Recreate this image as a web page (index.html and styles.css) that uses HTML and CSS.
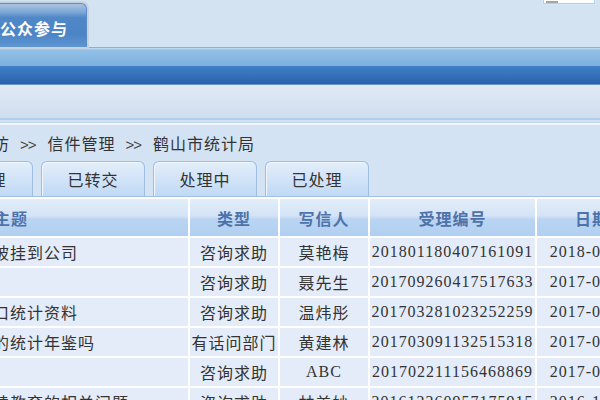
FILE: index.html
```html
<!DOCTYPE html>
<html lang="zh-CN">
<head>
    <meta charset="UTF-8">
    <meta name="viewport" content="width=device-width, initial-scale=1.0">
    <title>信件管理</title>
    <link rel="stylesheet" href="styles.css">
</head>
<body>
    <div class="top">
        <div class="nav-tab">公众参与</div>
        <div class="search"><span></span></div>
    </div>
    <div class="bar"></div>
    <div class="subbar"></div>
    <div class="stripe"></div>
    <div class="crumb">在线信访<span class="sep">&gt;&gt;</span>信件管理<span class="sep">&gt;&gt;</span>鹤山市统计局</div>
    <div class="tabs">
        <div class="tab">未处理</div>
        <div class="tab">已转交</div>
        <div class="tab">处理中</div>
        <div class="tab">已处理</div>
    </div>
    <div class="rule"></div>
    <table class="list">
        <colgroup>
            <col class="c-title">
            <col class="c-type">
            <col class="c-name">
            <col class="c-no">
            <col class="c-date">
        </colgroup>
        <thead>
            <tr>
                <th class="title">主题</th>
                <th>类型</th>
                <th>写信人</th>
                <th>受理编号</th>
                <th>日期</th>
            </tr>
        </thead>
        <tbody>
            <tr>
                <td class="title">我的养老保险怎么被挂到公司</td>
                <td>咨询求助</td>
                <td>莫艳梅</td>
                <td>201801180407161091</td>
                <td>2018-01-18</td>
            </tr>
            <tr>
                <td class="title">统计师报名咨询</td>
                <td>咨询求助</td>
                <td>聂先生</td>
                <td>201709260417517633</td>
                <td>2017-09-26</td>
            </tr>
            <tr>
                <td class="title">如何查询鹤山市人口统计资料</td>
                <td>咨询求助</td>
                <td>温炜彤</td>
                <td>201703281023252259</td>
                <td>2017-03-28</td>
            </tr>
            <tr>
                <td class="title">请问有鹤山市近年的统计年鉴吗</td>
                <td>有话问部门</td>
                <td>黄建林</td>
                <td>201703091132515318</td>
                <td>2017-03-09</td>
            </tr>
            <tr>
                <td class="title">关于统计数据</td>
                <td>咨询求助</td>
                <td>ABC</td>
                <td>201702211156468869</td>
                <td>2017-02-21</td>
            </tr>
            <tr>
                <td class="title">关于统计师参加继续教育的相关问题</td>
                <td>咨询求助</td>
                <td>林美妙</td>
                <td>201612260957175915</td>
                <td>2016-12-26</td>
            </tr>
        </tbody>
    </table>
</body>
</html>
```

FILE: styles.css
```css
body{
     margin:0;
     padding:0;
     width:600px;
     height:400px;
     overflow:hidden;
     background-color:#d4e3f3;
     font-family:"Noto Sans CJK SC", sans-serif;
     color:#333;
}
.top{
     height:47px;
     display:flex;
     justify-content:space-between;
     align-items:flex-start;
     background-color:#d4e3f2;
}
.nav-tab{
     margin-top:3px;
     margin-left:-18px;
     height:40px;
     padding:4px 18px 0 17px;
     line-height:40px;
     box-sizing:border-box;
     height:44px;
     font-size:16px;
     font-weight:bold;
     letter-spacing:1px;
     color:#fff;
     border:1px solid #5a8ccc;
     border-bottom:none;
     border-radius:6px 6px 0 0;
     box-shadow:0 0 0 2px #c6d2e0;
     background:linear-gradient(#abc3e2 0, #7fa8d8 18%, #4f87c7 32%, #4c85c6 70%, #5e95d1 100%);
}
.search{
     width:50px;
     height:18px;
     margin-top:-16px;
     margin-right:5px;
     background-color:#fff;
     border:1px solid #a9d0f7;
     box-shadow:0 0 0 1px #d6e9fb;
     display:flex;
     align-items:flex-end;
}
.search span{
     width:12px;
     height:2px;
     margin-left:2px;
     background-color:#a4a4a4;
}
.bar{
     height:36px;
     border-top:1px solid #86afd9;
     border-bottom:1px solid #6b93c4;
     background:linear-gradient(#c4def4 0, #92c0e7 2px, #7db0de 50%, #3f80c7 51%, #2a62ac 100%);
}
.subbar{
     height:33px;
     background:linear-gradient(#e0e9f5, #d1def0);
}
.stripe{
     height:8px;
     background:linear-gradient(#b2cceb 0, #b2cceb 2px, #d0e1f5 2px, #d0e1f5 4px, #bed4ef 4px, #bed4ef 5px, #f4f8fd 5px, #f4f8fd 7px, #d3e2f3 7px);
}
.crumb{
     height:35px;
     line-height:34px;
     margin-left:-58px;
     font-size:16px;
     letter-spacing:1px;
     white-space:nowrap;
}
.sep{
     font-family:"Liberation Sans", sans-serif;
     font-size:15px;
     letter-spacing:-1px;
     margin:0 12px 0 10px;
     color:#444;
}
.tabs{
     display:flex;
     gap:8px;
     height:35px;
     margin-left:-71px;
}
.tab{
     width:104px;
     box-sizing:border-box;
     border:1px solid #9dbde3;
     border-bottom:none;
     border-radius:6px 6px 0 0;
     box-shadow:inset 1px 1px 0 #f2f7fd;
     background:linear-gradient(#e3eefa, #c0d9f5);
     text-align:center;
     line-height:35px;
     font-size:16px;
     letter-spacing:1px;
}
.rule{
     height:3px;
     background:linear-gradient(#a3c1e5 0, #a3c1e5 1px, #fff 1px);
}
.list{
     margin-left:-150px;
     table-layout:fixed;
     border-collapse:separate;
     border-spacing:0;
     width:797px;
     font-family:"Liberation Serif", "Noto Sans CJK SC", serif;
     font-size:16px;
     letter-spacing:1px;
}
.c-title{ width:338px; }
.c-type{ width:90px; }
.c-name{ width:90px; }
.c-no{ width:167px; }
.c-date{ width:112px; }
.list th, .list td{
     padding:0;
     text-align:center;
     white-space:nowrap;
     overflow:hidden;
     border-left:2px solid #fff;
     border-bottom:2px solid #fff;
}
.list th:first-child, .list td:first-child{
     border-left:none;
}
.list th{
     height:37px;
     color:#4e72aa;
     font-weight:bold;
     background:linear-gradient(#e2edf9 0, #d4e4f6 45%, #bad5f3 55%, #b1cff0 100%);
}
.list td{
     height:28px;
     background-color:#e3ecf8;
}
.list th.title{
     text-align:left;
     padding-left:144px;
}
.list td.title{
     text-align:left;
     padding-left:7px;
}
```
